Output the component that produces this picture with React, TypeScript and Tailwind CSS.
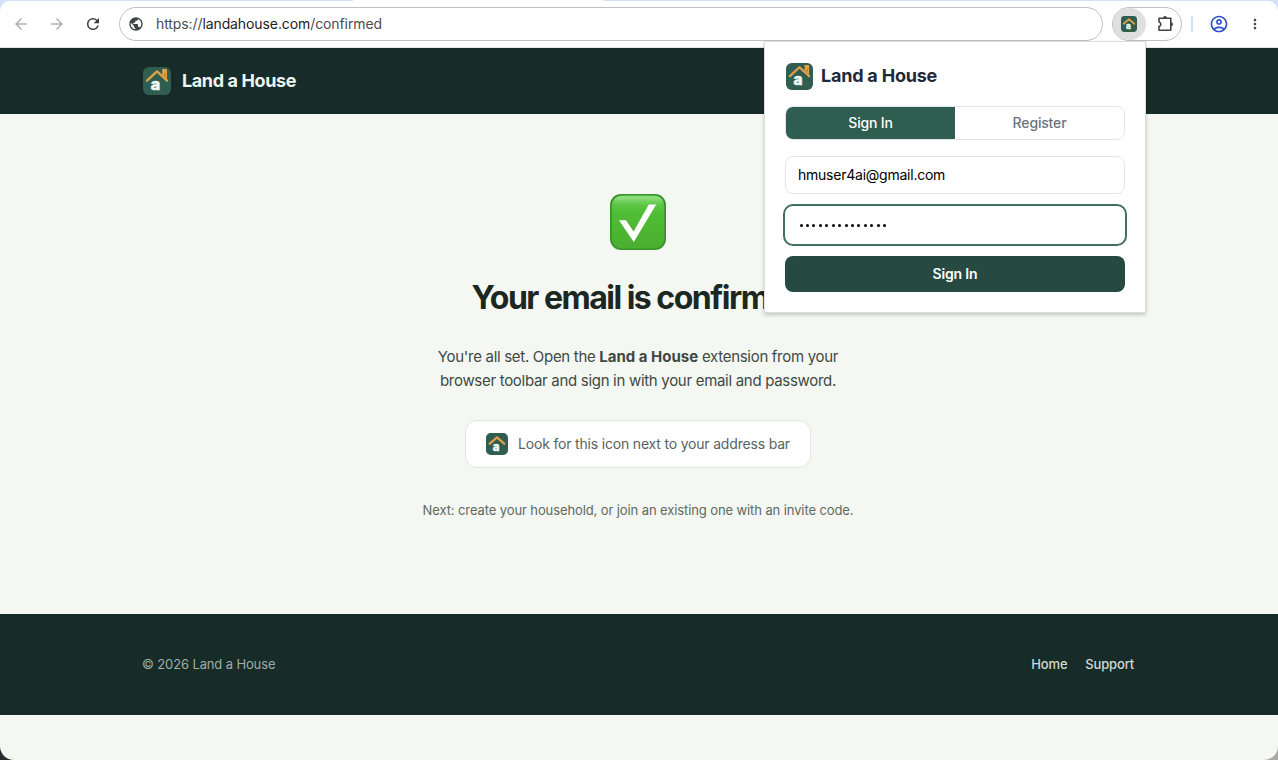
import React, { useState } from 'react';

interface LogoProps {
  className?: string;
  compact?: boolean;
}

const Logo: React.FC<LogoProps> = ({ className, compact }) => (
  <svg viewBox="0 0 28 28" className={className} aria-hidden="true">
    <rect width="28" height="28" rx="6" fill="#2f5d50" />
    {!compact && <path d="M19.2 2h4.8v10l-4.8-4z" fill="#dfa047" />}
    {!compact && <path d="M21 8.2 22.4 5.2v4.2z" fill="#8f7c49" />}
    <path
      d={compact ? 'M4.8 13.6 14 5.6l9.2 8' : 'M4 13.6 14 4.4 24 13.6'}
      fill="none"
      stroke="#dfa047"
      strokeWidth={compact ? 3 : 2.4}
      strokeLinecap="round"
      strokeLinejoin="round"
    />
    <text
      x={compact ? 12.8 : 12.4}
      y={compact ? 22.6 : 22.8}
      textAnchor="middle"
      fill="#f1f7f3"
      stroke="#f1f7f3"
      strokeWidth="0.6"
      fontSize={compact ? 14.5 : 16}
      fontWeight="800"
      className="font-['Inter',sans-serif]"
    >
      a
    </text>
  </svg>
);

// 24px grid icons for the browser toolbar
const ToolbarIcon: React.FC<{ d: string; className: string }> = ({ d, className }) => (
  <svg viewBox="0 0 24 24" fill="currentColor" className={className} aria-hidden="true">
    <path d={d} />
  </svg>
);

const icons = {
  back: 'M20 11H7.83l5.59-5.59L12 4l-8 8 8 8 1.41-1.41L7.83 13H20v-2z',
  forward: 'M12 4l-1.41 1.41L16.17 11H4v2h12.17l-5.58 5.59L12 20l8-8z',
  reload: 'M17.65 6.35A7.96 7.96 0 0 0 12 4a8 8 0 1 0 7.73 10h-2.08A6 6 0 1 1 12 6c1.66 0 3.14.69 4.22 1.78L13 11h7V4l-2.35 2.35z',
  globe: 'M12 2C6.48 2 2 6.48 2 12s4.48 10 10 10 10-4.48 10-10S17.52 2 12 2zm-1 17.93c-3.95-.49-7-3.85-7-7.93 0-.62.08-1.21.21-1.79L9 15v1c0 1.1.9 2 2 2v1.93zm6.9-2.54c-.26-.81-1-1.39-1.9-1.39h-1v-3c0-.55-.45-1-1-1H8v-2h2c.55 0 1-.45 1-1V7h2c1.1 0 2-.9 2-2v-.41c2.93 1.19 5 4.06 5 7.41 0 2.08-.8 3.97-2.1 5.39z',
  account: 'M12 2C6.48 2 2 6.48 2 12s4.48 10 10 10 10-4.48 10-10S17.52 2 12 2zM7.35 18.5C8.66 17.56 10.26 17 12 17s3.34.56 4.65 1.5C15.34 19.44 13.74 20 12 20s-3.34-.56-4.65-1.5zm10.79-1.38C16.45 15.8 14.32 15 12 15s-4.45.8-6.14 2.12C4.7 15.73 4 13.95 4 12c0-4.42 3.58-8 8-8s8 3.58 8 8c0 1.95-.7 3.73-1.86 5.12zM12 6c-1.93 0-3.5 1.57-3.5 3.5S10.07 13 12 13s3.5-1.57 3.5-3.5S13.93 6 12 6zm0 5c-.83 0-1.5-.67-1.5-1.5S11.17 8 12 8s1.5.67 1.5 1.5S12.83 11 12 11z',
  more: 'M12 8c1.1 0 2-.9 2-2s-.9-2-2-2-2 .9-2 2 .9 2 2 2zm0 2c-1.1 0-2 .9-2 2s.9 2 2 2 2-.9 2-2-.9-2-2-2zm0 6c-1.1 0-2 .9-2 2s.9 2 2 2 2-.9 2-2-.9-2-2-2z',
};

const PuzzleIcon = () => (
  <svg viewBox="0 0 18 18" className="w-[18px] h-[18px]" aria-hidden="true">
    <path
      d="M2 3.2h11.8v12.1H2v-3.8c2.4-.6 2.4-3.9 0-4.5z"
      fill="none"
      stroke="#414346"
      strokeWidth="1.6"
      strokeLinejoin="round"
    />
    <path d="M6 3a2 2 0 0 1 4 0zM14 7.2a2 2 0 0 1 0 4z" fill="#414346" />
  </svg>
);

const CheckMark = () => (
  <svg viewBox="0 0 56 56" className="w-14 h-14" aria-hidden="true">
    <defs>
      <linearGradient id="check-fill" x1="0" y1="0" x2="0" y2="1">
        <stop offset="0" stopColor="#6bd058" />
        <stop offset="0.3" stopColor="#51be36" />
        <stop offset="1" stopColor="#4aae2e" />
      </linearGradient>
      <linearGradient id="check-shine" x1="0" y1="0" x2="0" y2="1">
        <stop offset="0" stopColor="#a4e598" stopOpacity="0.85" />
        <stop offset="1" stopColor="#6bd058" stopOpacity="0" />
      </linearGradient>
    </defs>
    <rect width="56" height="56" rx="11" fill="#37952a" />
    <rect x="1.8" y="1.5" width="52.4" height="53" rx="10" fill="url(#check-fill)" />
    <rect x="3.5" y="2.5" width="49" height="10" rx="7" fill="url(#check-shine)" />
    <path d="M9 26.2h7l7.6 11.2L38.8 10.6h7.4L23.8 48z" fill="#fff" />
  </svg>
);

const BrowserToolbar = () => (
  <div className="bg-[#d5e1fb] pt-px relative">
    <div className="absolute top-0 left-[353px] w-[250px] h-1 bg-white" />
    <div className="relative h-[47px] bg-white rounded-t-[10px] border-b border-[#dfe8e2] flex items-center">
      <ToolbarIcon d={icons.back} className="ml-3 w-[18px] h-[18px] text-[#b0b1b3]" />
      <ToolbarIcon d={icons.forward} className="ml-[18px] w-[18px] h-[18px] text-[#b0b1b3]" />
      <ToolbarIcon d={icons.reload} className="ml-[18px] w-[18px] h-[18px] text-[#3c3e41]" />
      <div className="ml-[17px] w-[984px] h-[34px] rounded-full border border-[#bfc0c2] flex items-center">
        <ToolbarIcon d={icons.globe} className="ml-2 w-4 h-4 text-[#414346]" />
        <span className="ml-3 text-sm text-[#4a4c4f] tracking-[-0.007em]">
          https://<span className="text-[#1f2023]">landahouse.com</span>/confirmed
        </span>
      </div>
      <div className="ml-[9px] w-[70px] h-[34px] rounded-full border border-[#bfc0c2] flex items-center overflow-hidden">
        <div className="w-[33px] h-8 pr-px rounded-full bg-[#dfdfe0] flex items-center justify-center">
          <Logo compact className="w-4 h-4" />
        </div>
        <div className="ml-[11px]">
          <PuzzleIcon />
        </div>
      </div>
      <div className="ml-[9px] w-[2px] h-4 bg-[#d3e0fb]" />
      <ToolbarIcon d={icons.account} className="ml-4 w-5 h-5 text-[#2b50c8]" />
      <ToolbarIcon d={icons.more} className="ml-[18px] w-4 h-4 text-[#414346]" />
    </div>
  </div>
);

const ExtensionPopup = () => {
  const [activeTab, setActiveTab] = useState<'signin' | 'register'>('signin');
  const [email, setEmail] = useState('hmuser4ai@gmail.com');

  return (
    <div className="absolute top-[41px] left-[764px] w-[382px] h-[272px] px-5 pt-5 bg-white border border-[#dcdedc] shadow-[0_2px_4px_rgba(0,0,0,0.2)]">
      <div className="flex items-center gap-2 h-7">
        <Logo className="w-[27px] h-[27px] ml-px" />
        <span className="text-lg font-bold text-[#1f2937] tracking-[-0.012em]">Land a House</span>
      </div>

      <div className="mt-4 h-[34px] flex rounded-lg border border-[#e3e5e8] overflow-hidden text-sm font-medium tracking-[-0.012em]">
        {[
          { id: 'signin', label: 'Sign In' },
          { id: 'register', label: 'Register' },
        ].map((tab) => (
          <button
            key={tab.id}
            onClick={() => setActiveTab(tab.id as any)}
            className={`flex-1 ${activeTab === tab.id ? 'bg-[#2f5d50] text-white' : 'text-[#6b7280]'}`}
          >
            {tab.label}
          </button>
        ))}
      </div>

      <input
        value={email}
        onChange={(e) => setEmail(e.target.value)}
        className="block mt-4 w-full h-[38px] px-3 pb-0.5 rounded-lg border border-[#e3e5e8] text-sm text-black tracking-[-0.017em] outline-none"
      />
      <div className="mt-[10px] -mx-[2px] h-[42px] px-[14.5px] rounded-[10px] border-2 border-[#41705f] flex items-center gap-[3.45px]">
        {Array.from({ length: 14 }, (_, i) => (
          <span key={i} className="w-[3px] h-[3px] rounded-full bg-black" />
        ))}
      </div>
      <button className="block mt-[10px] w-full h-9 rounded-lg bg-[#264a41] text-sm font-semibold text-white tracking-[-0.01em]">
        Sign In
      </button>
    </div>
  );
};

const App = () => {
  return (
    <div className="relative w-[1278px] h-[760px] overflow-hidden bg-[linear-gradient(to_right,#2c2c2e_50%,#a8a8a8_50%)] font-['Inter',sans-serif]">
      <div className="h-full bg-[#f5f7f2] rounded-b-[14px] overflow-hidden">
        <BrowserToolbar />

        <header className="h-[66px] pl-[143px] bg-[#172c28] flex items-center gap-[11px]">
          <Logo className="w-7 h-7" />
          <span className="text-lg font-bold text-[#edf4ef] tracking-[-0.021em]">Land a House</span>
        </header>

        <main className="h-[500px] pt-20 pr-0.5 flex flex-col items-center text-center">
          <CheckMark />
          <h1 className="mt-[25px] text-[32px] leading-[46px] font-bold text-[#1c2722] tracking-[-0.047em] whitespace-nowrap">
            Your email is confirmed
          </h1>
          <p className="mt-6 text-[15px] leading-6 text-[#3d4a44] tracking-[-0.02em] whitespace-nowrap">
            You're all set. Open the <strong className="font-bold tracking-[-0.001em]">Land a House</strong> extension from your
            <br />
            browser toolbar and sign in with your email and password.
          </p>
          <div className="mt-[27px] w-[346px] h-12 rounded-xl bg-white border border-[#e0e8e3] flex items-center justify-center gap-[10px]">
            <Logo compact className="w-[22px] h-[22px]" />
            <span className="text-sm text-[#57635d] tracking-[-0.0133em] whitespace-nowrap">
              Look for this icon next to your address bar
            </span>
          </div>
          <p className="mt-8 text-[13px] leading-5 text-[#5e6a64] tracking-[-0.008em] whitespace-nowrap">
            Next: create your household, or join an existing one with an invite code.
          </p>
        </main>

        <footer className="h-[101px] pl-[142px] pr-36 bg-[#172c28] flex items-center justify-between text-[13px]">
          <span className="text-[#9eaca5] tracking-[-0.01em]">© 2026 Land a House</span>
          <nav className="flex gap-[18px] font-medium text-[#d0dad4] tracking-[-0.013em]">
            <a href="#">Home</a>
            <a href="#">Support</a>
          </nav>
        </footer>
      </div>

      <ExtensionPopup />
    </div>
  );
};

export default App;
